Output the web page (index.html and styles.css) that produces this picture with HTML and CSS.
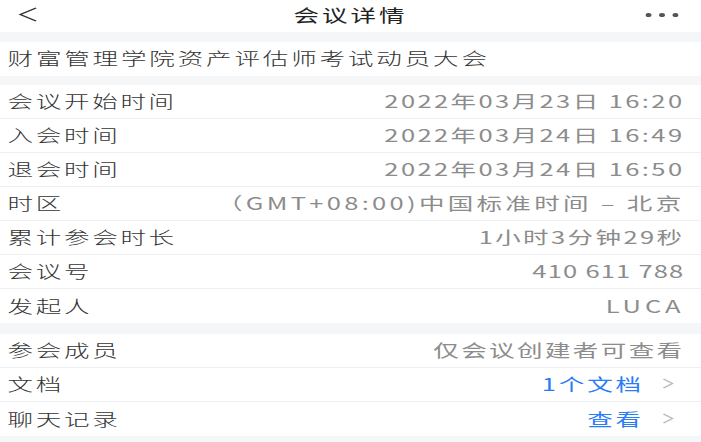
FILE: index.html
```html
<!DOCTYPE html>
<html lang="zh-CN">
<head>
  <meta charset="UTF-8">
  <title>会议详情</title>
  <link rel="stylesheet" href="styles.css">
</head>
<body>

<div class="screen">
  <header class="topbar">
    <span class="back">
      <svg width="13" height="15" viewBox="0 0 13 15"><path d="M12 1 L1.5 7.5 L12 14" fill="none" stroke="#333" stroke-width="1.3"/></svg>
    </span>
    <h1 class="title">会议详情</h1>
    <span class="more">
      <svg width="22" height="4" viewBox="0 0 22 4"><circle cx="2" cy="2" r="2" fill="#555"/><circle cx="11" cy="2" r="2" fill="#555"/><circle cx="20" cy="2" r="2" fill="#555"/></svg>
    </span>
  </header>

  <div class="meeting-name">财富管理学院资产评估师考试动员大会</div>

  <div class="group">
    <div class="row"><span class="label">会议开始时间</span><span class="value">2022年03月23日 16:20</span></div>
    <div class="row"><span class="label">入会时间</span><span class="value">2022年03月24日 16:49</span></div>
    <div class="row"><span class="label">退会时间</span><span class="value">2022年03月24日 16:50</span></div>
    <div class="row"><span class="label">时区</span><span class="value zone">（GMT+08:00)中国标准时间 – 北京</span></div>
    <div class="row"><span class="label">累计参会时长</span><span class="value">1小时3分钟29秒</span></div>
    <div class="row"><span class="label">会议号</span><span class="value tight">410 611 788</span></div>
    <div class="row"><span class="label">发起人</span><span class="value wide">LUCA</span></div>
  </div>

  <div class="group">
    <div class="row"><span class="label">参会成员</span><span class="value">仅会议创建者可查看</span></div>
    <div class="row link"><span class="label">文档</span><span class="value blue">1个文档</span>
      <svg class="chevron" width="8" height="11" viewBox="0 0 8 11"><path d="M1 1 L7 5.5 L1 10" fill="none" stroke="#bbb" stroke-width="1.2"/></svg>
    </div>
    <div class="row link"><span class="label">聊天记录</span><span class="value blue">查看</span>
      <svg class="chevron" width="8" height="11" viewBox="0 0 8 11"><path d="M1 1 L7 5.5 L1 10" fill="none" stroke="#bbb" stroke-width="1.2"/></svg>
    </div>
  </div>
</div>

</body>
</html>
```

FILE: styles.css
```css
html, body {
  margin: 0;
  padding: 0;
  background-color: #f5f6f8;
  overflow: hidden;
}

/* the capture is stretched sideways, so the phone screen is drawn narrow and widened */
.screen {
  width: 467px;
  height: 442px;
  transform: scaleX(1.5011);
  transform-origin: left top;
  font-family: "Noto Sans CJK SC", "Noto Sans", sans-serif;
  font-weight: 300;
  color: #333;
}

.topbar {
  display: grid;
  grid-template-columns: 1fr auto 1fr;
  align-items: center;
  box-sizing: border-box;
  height: 32px;
  padding-bottom: 3px;
  background-color: #fff;
}
.back {
  display: flex;
  padding-left: 12px;
}
.title {
  margin: 0;
  font-size: 17px;
  font-weight: 400;
  letter-spacing: 2px;
  color: #222;
}
.more {
  display: flex;
  justify-content: flex-end;
  padding-right: 15px;
}

.meeting-name {
  margin-top: 10px;
  height: 34px;
  line-height: 31px;
  padding-left: 5px;
  background-color: #fff;
  font-size: 17px;
  letter-spacing: 1.9px;
  white-space: nowrap;
}

.group {
  margin-top: 9px;
  background-color: #fff;
}
.group + .group {
  margin-top: 11px;
}

.row {
  display: flex;
  align-items: center;
  box-sizing: border-box;
  height: 34px;
  padding: 0 11px 2px 5px;
  border-bottom: 1px solid #eeeff1;
}
.row:last-child {
  border-bottom: none;
}
.label {
  flex: 1;
  font-size: 17px;
  letter-spacing: 1.8px;
  white-space: nowrap;
}
.value {
  font-size: 17px;
  font-weight: 400;
  letter-spacing: 1.6px;
  color: #8c8c8c;
  white-space: nowrap;
}
.value.zone {
  letter-spacing: 2.2px;
}
.value.wide {
  letter-spacing: 2.6px;
}
.value.tight {
  letter-spacing: 0.8px;
}
.value.blue {
  color: #2a7cf6;
  letter-spacing: 1.9px;
}
.row.link {
  padding-right: 18px;
}
.chevron {
  margin-left: 12px;
}
```
